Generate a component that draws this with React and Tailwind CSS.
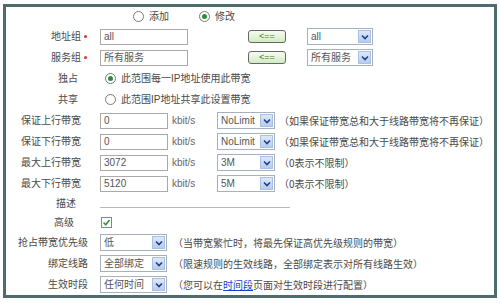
const font = { fontFamily: '"Liberation Sans", "Noto Sans CJK SC", sans-serif' };
const cjk = { fontFamily: '"Noto Sans CJK SC", "Liberation Sans", sans-serif' };

function Chevron() {
  return (
    <svg width="8" height="6" viewBox="0 0 8 6">
      <path d="M1 1.5 L4 4.5 L7 1.5" fill="none" stroke="#1d3f8a" strokeWidth="1.6" />
    </svg>
  );
}

function Select({ value, w }) {
  return (
    <div
      className="flex items-stretch h-[17px] border border-[#a7b0bd] bg-white"
      style={{ width: w }}
    >
      <div className="flex-1 flex items-center pl-[3px] text-[10px] text-[#555] overflow-hidden whitespace-nowrap">
        {value}
      </div>
      <div className="w-[13px] m-[1px] flex items-center justify-center bg-gradient-to-b from-[#dde8f9] to-[#b8ccee] border border-[#a9bfe4]">
        <Chevron />
      </div>
    </div>
  );
}

function Input({ value, w }) {
  return (
    <div
      className="h-[16px] border border-[#a9a9a9] bg-white flex items-center pl-[3px] text-[10px] text-[#555]"
      style={{ width: w }}
    >
      {value}
    </div>
  );
}

function Radio({ on }) {
  return (
    <span className="w-[11px] h-[11px] rounded-full border border-[#7a7a7a] bg-white flex items-center justify-center shrink-0">
      {on && <span className="w-[5px] h-[5px] rounded-full bg-[#2f8a3d]" />}
    </span>
  );
}

function Arrow() {
  return (
    <div className="w-[38px] h-[13px] rounded-[3px] border border-[#666] bg-gradient-to-b from-[#f6fcf1] to-[#d3ebc3] flex items-center justify-center text-[9px] text-[#3d7a2e] leading-none">
      {'<=='}
    </div>
  );
}

function Row({ label, h = 21, pr = 19, star, children }) {
  return (
    <div className="flex items-center" style={{ height: h }}>
      <div
        className="w-[94px] flex items-center justify-end text-[10px] text-[#4a4a4a] whitespace-nowrap"
        style={{ paddingRight: pr }}
      >
        {label}
        {star && <span className="w-[3px] h-[3px] rounded-full bg-[#e0303a] ml-[3px] -mr-[6px]" />}
      </div>
      <div className="flex items-center">{children}</div>
    </div>
  );
}

function Note({ children, ml }) {
  return (
    <span className="text-[10px] text-[#4a4a4a] whitespace-nowrap" style={{ marginLeft: ml, ...cjk }}>
      {children}
    </span>
  );
}

function BwRow({ label, value, sel, note }) {
  return (
    <Row label={label}>
      <Input value={value} w={68} />
      <span className="ml-[4px] w-[45px] text-[10px] text-[#666]">kbit/s</span>
      <Select value={sel} w={58} />
      <Note ml={4}>{note}</Note>
    </Row>
  );
}

export default function App() {
  const guarantee = '（如果保证带宽总和大于线路带宽将不再保证）';
  return (
    <div className="w-[500px] h-[303px] bg-white pt-[4px] px-[3px]" style={font}>
      <div className="w-[494px] h-[294px] border-[3px] border-[#4f6b6b] bg-white">
        <div className="h-[19px] flex items-center pl-[127px] text-[10px] text-[#4a4a4a]">
          <Radio />
          <span className="ml-[5px]">添加</span>
          <span className="ml-[30px]"><Radio on /></span>
          <span className="ml-[5px]">修改</span>
        </div>
        <Row label="地址组" star>
          <Input value="all" w={88} />
          <span className="ml-[60px]"><Arrow /></span>
          <span className="ml-[21px]"><Select value="all" w={66} /></span>
        </Row>
        <Row label="服务组" star>
          <Input value="所有服务" w={88} />
          <span className="ml-[60px]"><Arrow /></span>
          <span className="ml-[21px]"><Select value="所有服务" w={66} /></span>
        </Row>
        <Row label="独占" pr={22} h={20}>
          <span className="ml-[5px]"><Radio on /></span>
          <span className="ml-[5px] text-[10px] text-[#4a4a4a]">此范围每一IP地址使用此带宽</span>
        </Row>
        <Row label="共享" pr={22} h={22}>
          <span className="ml-[5px]"><Radio /></span>
          <span className="ml-[5px] text-[10px] text-[#4a4a4a]">此范围IP地址共享此设置带宽</span>
        </Row>
        <BwRow label="保证上行带宽" value="0" sel="NoLimit" note={guarantee} />
        <BwRow label="保证下行带宽" value="0" sel="NoLimit" note={guarantee} />
        <BwRow label="最大上行带宽" value="3072" sel="3M" note="（0表示不限制）" />
        <BwRow label="最大下行带宽" value="5120" sel="5M" note="（0表示不限制）" />
        <Row label="描述" pr={24} h={18}>
          <div className="w-[190px] h-[1px] bg-[#b9b9b9] mt-[9px]" />
        </Row>
        <Row label="高级" pr={26} h={20}>
          <span className="ml-[1px] w-[11px] h-[11px] border border-[#7a8a9a] bg-white flex items-center justify-center">
            <svg width="9" height="9" viewBox="0 0 9 9">
              <path d="M1.5 4.5 L3.7 6.7 L7.5 2" fill="none" stroke="#2f9a3a" strokeWidth="1.6" />
            </svg>
          </span>
        </Row>
        <Row label="抢占带宽优先级" pr={12}>
          <Select value="低" w={67} />
          <Note ml={6}>（当带宽繁忙时，将最先保证高优先级规则的带宽）</Note>
        </Row>
        <Row label="绑定线路" pr={12}>
          <Select value="全部绑定" w={67} />
          <Note ml={6}>（限速规则的生效线路，全部绑定表示对所有线路生效）</Note>
        </Row>
        <Row label="生效时段" pr={12}>
          <Select value="任何时间" w={67} />
          <Note ml={6}>
            （您可以在<span className="text-[#1a3fd0] underline">时间段</span>页面对生效时段进行配置）
          </Note>
        </Row>
      </div>
    </div>
  );
}
